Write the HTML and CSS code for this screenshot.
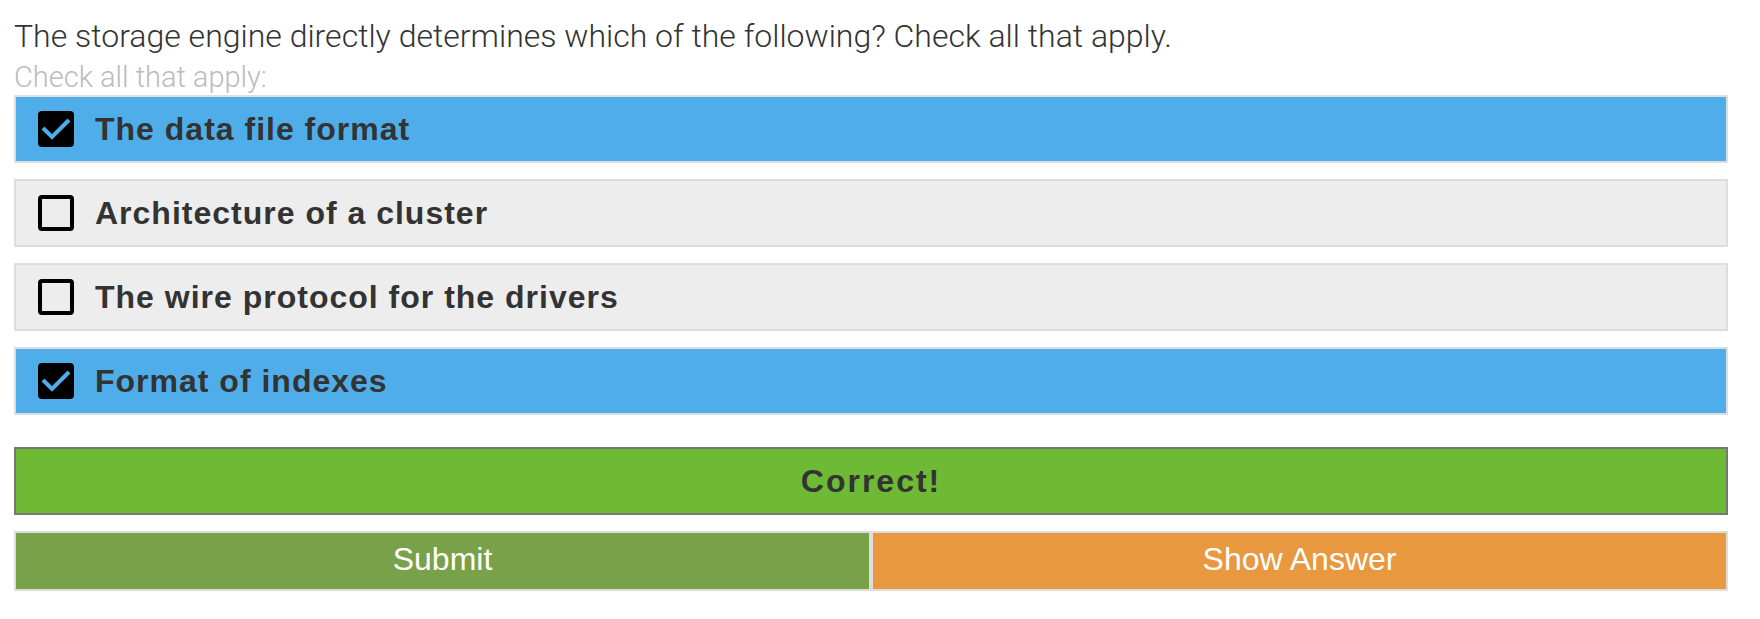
FILE: index.html
```html
<!DOCTYPE html>
<html lang="en">
<head>
<meta charset="utf-8">
<meta name="viewport" content="width=device-width, initial-scale=1">
<title>Storage engine quiz</title>
<link rel="stylesheet" href="styles.css">
</head>
<body>
<form class="quiz">
  <fieldset class="problem">
    <legend class="question">The storage engine directly determines which of the following? Check all that apply.</legend>
    <p class="hint">Check all that apply:</p>
    <div class="choices">
      <label class="choice">
        <span class="box"><input class="box-input" type="checkbox" checked><svg class="tick" viewBox="0 0 36 36" aria-hidden="true"><path d="M5 17 L14 26 L31 9"/></svg></span>
        <span class="choice-text">The data file format</span>
      </label>
      <label class="choice">
        <span class="box"><input class="box-input" type="checkbox"><svg class="tick" viewBox="0 0 36 36" aria-hidden="true"><path d="M5 17 L14 26 L31 9"/></svg></span>
        <span class="choice-text">Architecture of a cluster</span>
      </label>
      <label class="choice">
        <span class="box"><input class="box-input" type="checkbox"><svg class="tick" viewBox="0 0 36 36" aria-hidden="true"><path d="M5 17 L14 26 L31 9"/></svg></span>
        <span class="choice-text">The wire protocol for the drivers</span>
      </label>
      <label class="choice">
        <span class="box"><input class="box-input" type="checkbox" checked><svg class="tick" viewBox="0 0 36 36" aria-hidden="true"><path d="M5 17 L14 26 L31 9"/></svg></span>
        <span class="choice-text">Format of indexes</span>
      </label>
    </div>
  </fieldset>
  <div class="result" role="status">Correct!</div>
  <div class="actions">
    <button class="action submit" type="button">Submit</button>
    <button class="action show" type="button">Show Answer</button>
  </div>
</form>
</body>
</html>
```
FILE: styles.css
```css
* {
  box-sizing: border-box;
}

body {
  margin: 0;
  background: #fff;
  color: #333;
  font-family: "Liberation Sans", Arial, sans-serif;
  font-size: 32px;
}

.quiz {
  padding: 16px 32px 28px 14px;
}

.problem {
  margin: 0;
  padding: 0;
  border: 0;
  min-width: 0;
}

.question {
  padding: 0;
  font-family: Roboto, sans-serif;
  font-size: 32px;
  font-weight: 300;
  line-height: 40px;
}

.hint {
  margin: 0;
  padding-top: 3px;
  color: #bbb;
  font-family: Roboto, sans-serif;
  font-size: 29px;
  font-weight: 300;
  line-height: 36px;
}

.choices {
  display: grid;
  gap: 16px;
}

.choice {
  display: flex;
  align-items: center;
  gap: 21px;
  min-height: 68px;
  padding: 8px 22px;
  border: 2px solid #ddd;
  background: #ededed;
  font-weight: 700;
  letter-spacing: 1px;
}

.choice:has(:checked) {
  background: #4faee9;
}

.box {
  display: grid;
  flex: none;
  width: 36px;
  height: 36px;
}

.box > * {
  grid-area: 1 / 1;
}

.box-input {
  appearance: none;
  width: 100%;
  height: 100%;
  margin: 0;
  border: 4px solid #000;
  border-radius: 4px;
}

.box-input:checked {
  background: #000;
}

.tick {
  visibility: hidden;
  z-index: 1;
  pointer-events: none;
  fill: none;
  stroke: #4faee9;
  stroke-width: 4;
}

.box-input:checked + .tick {
  visibility: visible;
}

.result {
  display: grid;
  place-items: center;
  min-height: 68px;
  margin: 32px 0 16px;
  border: 2px solid #777;
  background: #6eba35;
  font-weight: 700;
  letter-spacing: 2px;
}

.actions {
  display: grid;
  grid-template-columns: 1fr 1fr;
}

.action {
  min-height: 60px;
  padding: 0 16px 4px;
  border: 2px solid #ddd;
  color: #fff;
  font-family: inherit;
  font-size: 32px;
}

.submit {
  background: #79a149;
}

.show {
  background: #e8983f;
}
```
